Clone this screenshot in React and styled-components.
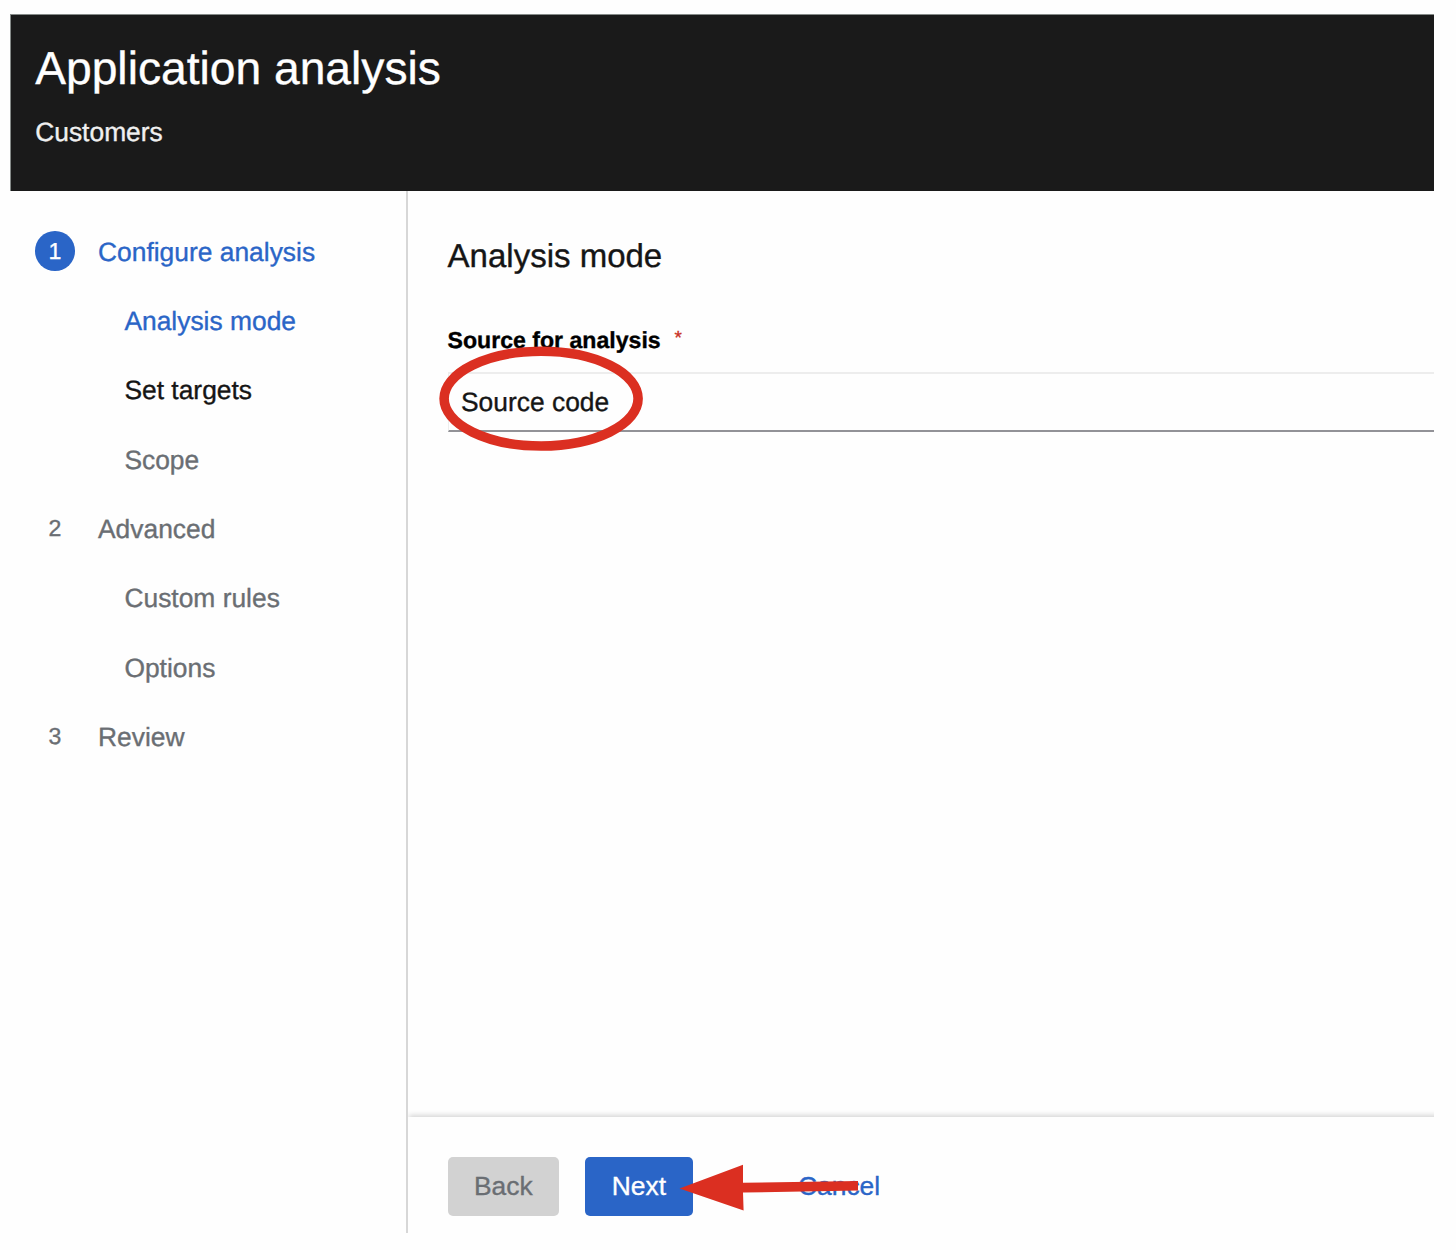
import React from "react";
import styled, { createGlobalStyle } from "styled-components";

const GlobalStyle = createGlobalStyle`
  *, *::before, *::after { box-sizing: border-box; }
  body {
    margin: 0;
    background: #fefefe;
    font-family: "Liberation Sans", Arial, Helvetica, sans-serif;
    font-size: 26.4px;
    color: #151515;
    text-rendering: geometricPrecision;
    -webkit-text-stroke: 0.35px currentColor;
  }
  h1, h2, ol, li { margin: 0; padding: 0; font-weight: 400; list-style: none; }
  button { font: inherit; border: 0; padding: 0; }
`;

const blue = "#2a65c7";
const red = "#db2f21";

const Page = styled.div`
  width: 1456px;
  height: 1250px;
  padding: 14px 22px 17px 10px;
  overflow: hidden;
`;

const Wizard = styled.div`
  position: relative;
  height: 100%;
  display: flex;
  flex-direction: column;
`;

const Header = styled.header`
  flex: none;
  height: 177px;
  padding: 25px 24.2px 0;
  background: #1a1a1a;
  border: solid #858a88;
  border-width: 1px 0 0 1px;
  color: #fff;
`;

const Title = styled.h1`
  font-size: 46.2px;
  line-height: 56px;
`;

const Subtitle = styled.div`
  margin-top: 20px;
  line-height: 32px;
  color: #f0f0f0;
`;

const Body = styled.div`
  flex: 1;
  min-height: 0;
  display: flex;
`;

const Sidebar = styled.nav`
  flex: none;
  width: 398px;
  padding: 25.7px 0 0 25px;
  border-right: 2px solid #d7d7d7;
`;

const Step = styled.li`
  display: flex;
  align-items: center;
  height: 69.3px;
  padding-left: ${(p) => (p.$sub ? "89.4px" : "0")};
  color: ${(p) => p.$color};
`;

const StepNumber = styled.span`
  flex: none;
  display: grid;
  place-items: center;
  width: 39.6px;
  height: 39.6px;
  margin: -1px 23.4px 0 0;
  padding-top: 1px;
  border-radius: 50%;
  font-size: 23.1px;
  line-height: 1;
  background: ${(p) => (p.$current ? blue : "transparent")};
  color: ${(p) => (p.$current ? "#fff" : "inherit")};
`;

const StepLabel = styled.span`
  line-height: 32px;
  padding-top: 1px;
`;

const Main = styled.div`
  flex: 1;
  min-width: 0;
  display: flex;
  flex-direction: column;
`;

const Content = styled.section`
  flex: 1;
  padding: 44px 0 0 39.6px;
`;

const Heading = styled.h2`
  font-size: 33px;
  line-height: 42px;
`;

const FieldLabel = styled.label`
  display: flex;
  margin-top: 48px;
  font-size: 23.1px;
  line-height: 30px;
  font-weight: 700;
  color: #000;
`;

const Required = styled.span`
  margin-left: 13.8px;
  font-size: 19px;
  line-height: 27px;
  font-weight: 400;
  color: #c9301f;
`;

const Select = styled.div`
  display: flex;
  align-items: center;
  height: 60px;
  margin-top: 17px;
  padding-left: 12.4px;
  border: solid #ededed;
  border-width: 2px 0 2px 1px;
  border-bottom-color: #929297;
`;

const Footer = styled.footer`
  flex: none;
  display: flex;
  align-items: flex-start;
  height: 116px;
  margin-right: -12px;
  padding: 40px 0 0 39.6px;
  background: #fefefe;
  box-shadow: 0 -3px 5px -1px rgba(3, 3, 3, 0.16);
  clip-path: inset(-12px 12px 0 0);
`;

const Button = styled.button`
  height: 59px;
  width: ${(p) => p.$width};
  margin-right: ${(p) => p.$gap || "0"};
  border-radius: 5px;
  background: ${(p) => p.$bg || "transparent"};
  color: ${(p) => p.$color};
`;

const Annotations = styled.svg`
  position: absolute;
  inset: 0;
  width: 100%;
  height: 100%;
  pointer-events: none;
`;

const gray = "#6a6e73";
const steps = [
  { number: 1, label: "Configure analysis", color: blue, current: true },
  { label: "Analysis mode", color: blue },
  { label: "Set targets", color: "#151515" },
  { label: "Scope", color: gray },
  { number: 2, label: "Advanced", color: gray },
  { label: "Custom rules", color: gray },
  { label: "Options", color: gray },
  { number: 3, label: "Review", color: gray },
];

export default function App() {
  return (
    <Page>
      <GlobalStyle />
      <Wizard>
        <Header>
          <Title>Application analysis</Title>
          <Subtitle>Customers</Subtitle>
        </Header>
        <Body>
          <Sidebar>
            <ol>
              {steps.map((s) => (
                <Step key={s.label} $sub={!s.number} $color={s.color}>
                  {s.number && <StepNumber $current={s.current}>{s.number}</StepNumber>}
                  <StepLabel>{s.label}</StepLabel>
                </Step>
              ))}
            </ol>
          </Sidebar>
          <Main>
            <Content>
              <Heading>Analysis mode</Heading>
              <FieldLabel>
                Source for analysis<Required>*</Required>
              </FieldLabel>
              <Select>Source code</Select>
            </Content>
            <Footer>
              <Button $width="111.4px" $gap="26.2px" $bg="#d2d2d2" $color={gray}>Back</Button>
              <Button $width="107.4px" $gap="79px" $bg={blue} $color="#fff">Next</Button>
              <Button $width="135px" $color={blue}>Cancel</Button>
            </Footer>
          </Main>
        </Body>
        <Annotations viewBox="10 14 1424 1219">
          <ellipse cx="541.1" cy="398.6" rx="97" ry="47.4" fill="none" stroke={red} strokeWidth="9.6" />
          <path d="M679.5 1188.5L743 1164.8V1182.8L858 1181V1190.6L743 1192.6L743.6 1210.6Z" fill={red} />
        </Annotations>
      </Wizard>
    </Page>
  );
}
